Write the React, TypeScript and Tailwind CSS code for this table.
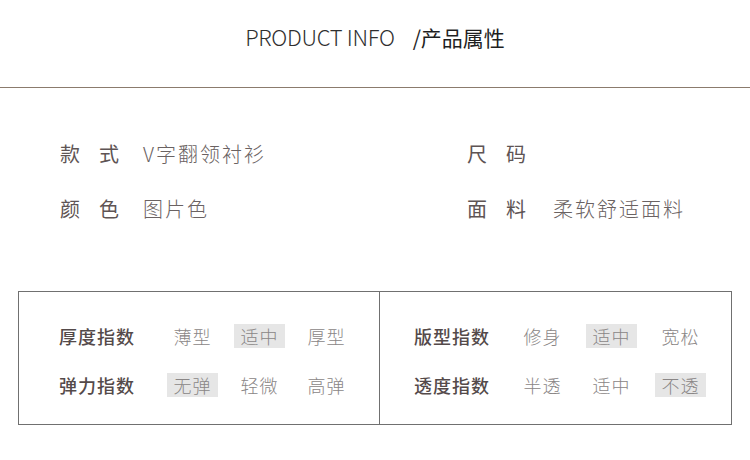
const font = { fontFamily: '"Noto Sans CJK SC", "Noto Sans", sans-serif' }

type Opt = { text: string; on?: boolean }

function IndexRow({ label, opts, labelW, gap }: { label: string; opts: Opt[]; labelW: string; gap: string }) {
  return (
    <div className="flex items-center h-[24px]">
      <div className={`${labelW} text-[18px] font-medium tracking-[1px] text-[#544a4a] leading-none`}>{label}</div>
      <div className={`flex ${gap}`}>
        {opts.map((o, i) => (
          <div
            key={i}
            className={`w-[51px] h-[24px] flex items-center justify-center text-[18px] font-light tracking-[1px] text-[#8a8686] leading-none ${o.on ? 'bg-[#e6e6e6]' : ''}`}
          >
            {o.text}
          </div>
        ))}
      </div>
    </div>
  )
}

export default function App() {
  return (
    <div className="w-[750px] h-[460px] bg-white overflow-hidden" style={font}>
      <div className="h-[87px] flex justify-center pt-[20px]">
        <div className="flex items-baseline h-[24px]">
          <span className="text-[22px] font-light text-[#2f2f2f] tracking-[-0.3px]">PRODUCT INFO</span>
          <span className="ml-[18px] text-[21px] text-[#1f1f1f]">/产品属性</span>
        </div>
      </div>
      <div className="h-px bg-[#8b7b6d]" />

      <div className="grid grid-cols-[407px_1fr] pl-[60px] pt-[54px] gap-y-[31px] text-[20px] leading-[24px] text-[#5e5454]">
        <div className="flex">
          <span className="w-[83px] flex gap-[19px]"><span>款</span><span>式</span></span>
          <span className="font-light tracking-[2px] text-[#6a6262]">V字翻领衬衫</span>
        </div>
        <div className="flex">
          <span className="w-[86px] flex gap-[19px]"><span>尺</span><span>码</span></span>
        </div>
        <div className="flex">
          <span className="w-[83px] flex gap-[19px]"><span>颜</span><span>色</span></span>
          <span className="font-light tracking-[2px] text-[#6a6262]">图片色</span>
        </div>
        <div className="flex">
          <span className="w-[86px] flex gap-[19px]"><span>面</span><span>料</span></span>
          <span className="font-light tracking-[2px] text-[#6a6262]">柔软舒适面料</span>
        </div>
      </div>

      <div className="mx-[18px] mt-[70px] h-[134px] border border-[#707070] flex">
        <div className="w-[361px] border-r border-[#707070] pl-[40px] pt-[32px] flex flex-col gap-[25px]">
          <IndexRow
            label="厚度指数"
            labelW="w-[108px]"
            gap="gap-[16px]"
            opts={[{ text: '薄型' }, { text: '适中', on: true }, { text: '厚型' }]}
          />
          <IndexRow
            label="弹力指数"
            labelW="w-[108px]"
            gap="gap-[16px]"
            opts={[{ text: '无弹', on: true }, { text: '轻微' }, { text: '高弹' }]}
          />
        </div>
        <div className="flex-1 pl-[34px] pt-[32px] flex flex-col gap-[25px]">
          <IndexRow
            label="版型指数"
            labelW="w-[103px]"
            gap="gap-[18px]"
            opts={[{ text: '修身' }, { text: '适中', on: true }, { text: '宽松' }]}
          />
          <IndexRow
            label="透度指数"
            labelW="w-[103px]"
            gap="gap-[18px]"
            opts={[{ text: '半透' }, { text: '适中' }, { text: '不透', on: true }]}
          />
        </div>
      </div>
    </div>
  )
}
